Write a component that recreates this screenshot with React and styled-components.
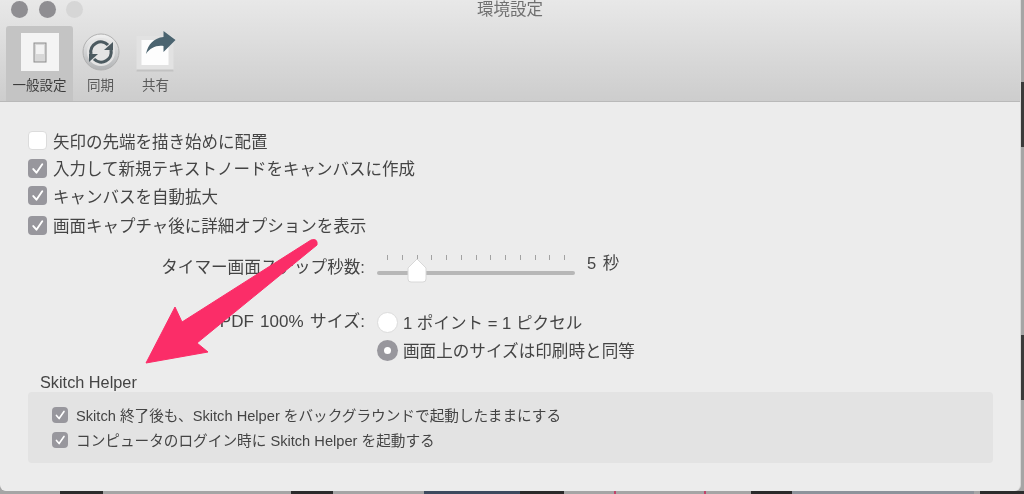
import React from "react";
import styled, { createGlobalStyle } from "styled-components";

const Global = createGlobalStyle`
  html, body { margin: 0; padding: 0; width: 1024px; height: 494px; overflow: hidden; background: #a5a5a5; }
  #root { width: 1024px; height: 494px; }
`;
const Desktop = styled.div`
  position: relative; width: 1024px; height: 494px; overflow: hidden; background: #a5a5a5;
  font-family: "Liberation Sans", "Noto Sans CJK JP", sans-serif; color: #4a4a4a;
`;
const Window = styled.div`
  position: relative; z-index: 1; width: 1020px; height: 491px; display: flex; flex-direction: column; background: #ececec;
  border-radius: 0 0 6px 6px; overflow: hidden; box-shadow: 1px 0 0 #d8d8d8; filter: blur(0.35px);
`;
const TopBar = styled.div`
  height: 101px; flex: none; display: flex; flex-direction: column;
  background: linear-gradient(#e8e8e8, #cdcdcd); border-bottom: 1px solid #b9b9b9;
`;
const TitleRow = styled.div`position: relative; height: 25px; flex: none; display: flex; gap: 10.5px; padding: 1px 0 0 11px;`;
const Light = styled.span`
  width: 17px; height: 17px; border-radius: 50%; background: ${p => p.$off ? "#d6d6d6" : "#8f8e92"};
`;
const Title = styled.div`
  position: absolute; left: 0; right: 0; top: -1px; text-align: center; font-size: 16.5px; line-height: 20px; color: #707070;
`;
const Tabs = styled.div`flex: 1; display: flex; padding-left: 6px;`;
const Tab = styled.div`
  width: ${p => p.$w}px; display: flex; flex-direction: column; align-items: center; padding-top: 6px;
  background: ${p => p.$active ? "#c4c4c4" : "transparent"}; border-radius: 3px 3px 0 0;
`;
const TabIcon = styled.div`height: 40px; display: flex; align-items: center; justify-content: center;`;
const TabLabel = styled.div`font-size: 13.5px; line-height: 18px; margin-top: 5px; color: ${p => p.$active ? "#3c3c3c" : "#5a5a5a"};`;
const Body = styled.div`flex: 1; display: flex; flex-direction: column; padding: 25px 27px 0 28px;`;
const CheckRow = styled.div`display: flex; align-items: center; gap: ${p => p.$small ? 8 : 6}px; height: ${p => p.$h || 27}px;`;
const Box = styled.span`
  flex: none; box-sizing: border-box; width: ${p => p.$s}px; height: ${p => p.$s}px; border-radius: 4px;
  display: flex; align-items: center; justify-content: center;
  background: ${p => p.$on ? "#98979d" : "#fff"}; border: ${p => p.$on ? "none" : "1px solid #dcdcdc"};
`;
const Label = styled.span`font-size: ${p => p.$size || 16.5}px; white-space: nowrap; color: #444;`;
const FormRow = styled.div`display: grid; grid-template-columns: 337px auto; column-gap: 12px; align-items: center;`;
const FormLabel = styled.div`text-align: right; font-size: 16.6px; color: #444; white-space: nowrap;`;
const SliderRow = styled(FormRow)`margin-top: 5.5px; height: 40px;`;
const SliderWrap = styled.div`display: flex; align-items: center; gap: 12px;`;
const Slider = styled.div`position: relative; width: 198px; height: 40px;`;
const Ticks = styled.div`display: flex; justify-content: space-between; padding: 9px 10px 0; box-sizing: border-box;`;
const Tick = styled.span`width: 1px; height: 5px; background: #a2a2a2;`;
const Track = styled.div`position: absolute; left: 0; right: 0; top: 25px; height: 4px; border-radius: 2px; background: #b7b7b7;`;
const Thumb = styled.svg`position: absolute; left: 29px; top: 12px;`;
const Value = styled.span`font-size: 16.5px; color: #444; margin-top: -8px; word-spacing: 2px;`;
const RadioBlock = styled.div`display: flex; flex-direction: column;`;
const RadioRow = styled.div`display: flex; align-items: center; gap: 5px; height: 28px;`;
const Radio = styled.span`
  flex: none; box-sizing: border-box; width: 21px; height: 21px; border-radius: 50%;
  display: flex; align-items: center; justify-content: center;
  background: ${p => p.$on ? "#98979d" : "#fff"}; border: ${p => p.$on ? "none" : "1px solid #dcdcdc"};
  &::after { content: ""; width: 7px; height: 7px; border-radius: 50%; background: ${p => p.$on ? "#fff" : "transparent"}; }
`;
const RadioForm = styled(FormRow)`margin-top: 22px; align-items: start;`;
const PdfLabel = styled(FormLabel)`line-height: 28px; font-size: 17px; word-spacing: 1.5px;`;
const RadioLabel = styled(Label)`font-size: 16.6px;`;
const GroupTitle = styled.div`font-size: 16.3px; margin: 10px 0 0 12px; line-height: 16px; color: #444;`;
const Group = styled.div`
  margin-top: 2px; height: 71px; box-sizing: border-box; padding: 10px 24px; background: #e3e3e3;
  border-radius: 4px; display: flex; flex-direction: column;
`;
const Strip = styled.div`position: absolute; background: ${p => p.$c};`;
const Arrow = styled.svg`position: absolute; z-index: 2; left: 0; top: 0; pointer-events: none;`;

const Check = ({ s }) => (
  <svg width={s} height={s} viewBox="0 0 18 18" fill="none">
    <path d="M5 9.5 L8 13 L13.5 5" stroke="#fff" strokeWidth="1.8" strokeLinecap="round" strokeLinejoin="round" />
  </svg>
);
const CheckBox = ({ on, s = 19 }) => <Box $on={on} $s={s}>{on && <Check s={s} />}</Box>;

const SwitchIcon = () => (
  <svg width="38" height="38" viewBox="0 0 38 38">
    <rect width="38" height="38" fill="#f4f4f4" />
    <rect x="13" y="10" width="12" height="19" fill="#d8d8d8" stroke="#8d8d8d" />
    <rect x="15" y="12" width="8" height="9" fill="#f2f2f2" />
  </svg>
);
const SyncIcon = () => (
  <svg width="38" height="38" viewBox="0 0 38 38">
    <defs>
      <linearGradient id="sy" x1="0" y1="0" x2="0" y2="1">
        <stop offset="0" stopColor="#f2f2f2" /><stop offset="1" stopColor="#b0b2b4" />
      </linearGradient>
    </defs>
    <circle cx="19" cy="19" r="18" fill="url(#sy)" stroke="#b0b0b0" />
    <circle cx="19" cy="19" r="14" fill="#e4e4e4" />
    <path d="M9 21A10 10 0 0 1 26 12" fill="none" stroke="#4c5a60" strokeWidth="3.2" />
    <path d="M29 17A10 10 0 0 1 12 26" fill="none" stroke="#4c5a60" strokeWidth="3.2" />
    <path d="M22 17h9V9z" fill="#4c5a60" />
    <path d="M16 21H7v8z" fill="#4c5a60" />
  </svg>
);
const ShareIcon = () => (
  <svg width="40" height="42" viewBox="0 0 40 42">
    <rect x="0.5" y="5" width="37" height="35" fill="#e2e2e2" />
    <rect x="0.5" y="38.5" width="37" height="2" fill="#c2c2c2" />
    <rect x="5.5" y="9" width="27" height="25" fill="#fdfdfd" />
    <path d="M10 23C12 13 18 7 27.5 6V0L39.5 9 27.5 21V15C20 14 14 17 10 23z" fill="#4b6470" />
  </svg>
);

const rows = ["矢印の先端を描き始めに配置", "入力して新規テキストノードをキャンバスに作成", "キャンバスを自動拡大", "画面キャプチャ後に詳細オプションを表示"];
const stripsBottom = [
  [60, 43, "#2c2c2c"], [291, 42, "#2b2b2b"], [424, 96, "#3d4a5e"], [520, 44, "#2a2a2a"],
  [614, 2, "#c0456a"], [704, 2, "#c0456a"], [751, 41, "#2a2a2a"], [792, 182, "#8d939b"], [980, 44, "#2c2c2c"],
];
const stripsRight = [[82, 65], [335, 65]];

export default function App() {
  return (
    <Desktop>
      <Global />
      <Window>
        <TopBar>
          <TitleRow>
            <Light /><Light /><Light $off />
            <Title>環境設定</Title>
          </TitleRow>
          <Tabs>
            <Tab $w={67} $active><TabIcon><SwitchIcon /></TabIcon><TabLabel $active>一般設定</TabLabel></Tab>
            <Tab $w={55}><TabIcon><SyncIcon /></TabIcon><TabLabel>同期</TabLabel></Tab>
            <Tab $w={55}><TabIcon><ShareIcon /></TabIcon><TabLabel>共有</TabLabel></Tab>
          </Tabs>
        </TopBar>
        <Body>
          {rows.map((r, i) => (
            <CheckRow key={r} $h={i === 3 ? 31 : 27.5}><CheckBox on={i > 0} /><Label>{r}</Label></CheckRow>
          ))}
          <SliderRow>
            <FormLabel>タイマー画面ステップ秒数:</FormLabel>
            <SliderWrap>
              <Slider>
                <Ticks>{Array.from({ length: 13 }).map((_, i) => <Tick key={i} />)}</Ticks>
                <Track />
                <Thumb width="22" height="26" viewBox="0 0 22 26">
                  <path d="M11 1 L20 10 V21 a3 3 0 0 1-3 3 H5 a3 3 0 0 1-3-3 V10 Z" fill="#fff" stroke="#d8d8d8" />
                </Thumb>
              </Slider>
              <Value>5 秒</Value>
            </SliderWrap>
          </SliderRow>
          <RadioForm>
            <PdfLabel>PDF 100% サイズ:</PdfLabel>
            <RadioBlock>
              <RadioRow><Radio /><RadioLabel>1 ポイント = 1 ピクセル</RadioLabel></RadioRow>
              <RadioRow><Radio $on /><RadioLabel>画面上のサイズは印刷時と同等</RadioLabel></RadioRow>
            </RadioBlock>
          </RadioForm>
          <GroupTitle>Skitch Helper</GroupTitle>
          <Group>
            <CheckRow $small $h={25}><CheckBox on s={16} /><Label $size={14.65}>Skitch 終了後も、Skitch Helper をバックグラウンドで起動したままにする</Label></CheckRow>
            <CheckRow $small $h={25}><CheckBox on s={16} /><Label $size={14.65}>コンピュータのログイン時に Skitch Helper を起動する</Label></CheckRow>
          </Group>
        </Body>
      </Window>
      {stripsBottom.map(([l, w, c]) => <Strip key={l} $c={c} style={{ left: l, width: w, top: 491, height: 3 }} />)}
      {stripsRight.map(([t, h]) => <Strip key={t} $c="#3a3a3a" style={{ left: 1021, width: 3, top: t, height: h }} />)}
      <Arrow width="1024" height="494" viewBox="0 0 1024 494">
        <path d="M146 363 L175 307 L182 322 L311 240 Q318 238 317 245 L197 343 L208 352 Z" fill="#fb2d68" stroke="#fb2d68" strokeLinejoin="round" />
      </Arrow>
    </Desktop>
  );
}
